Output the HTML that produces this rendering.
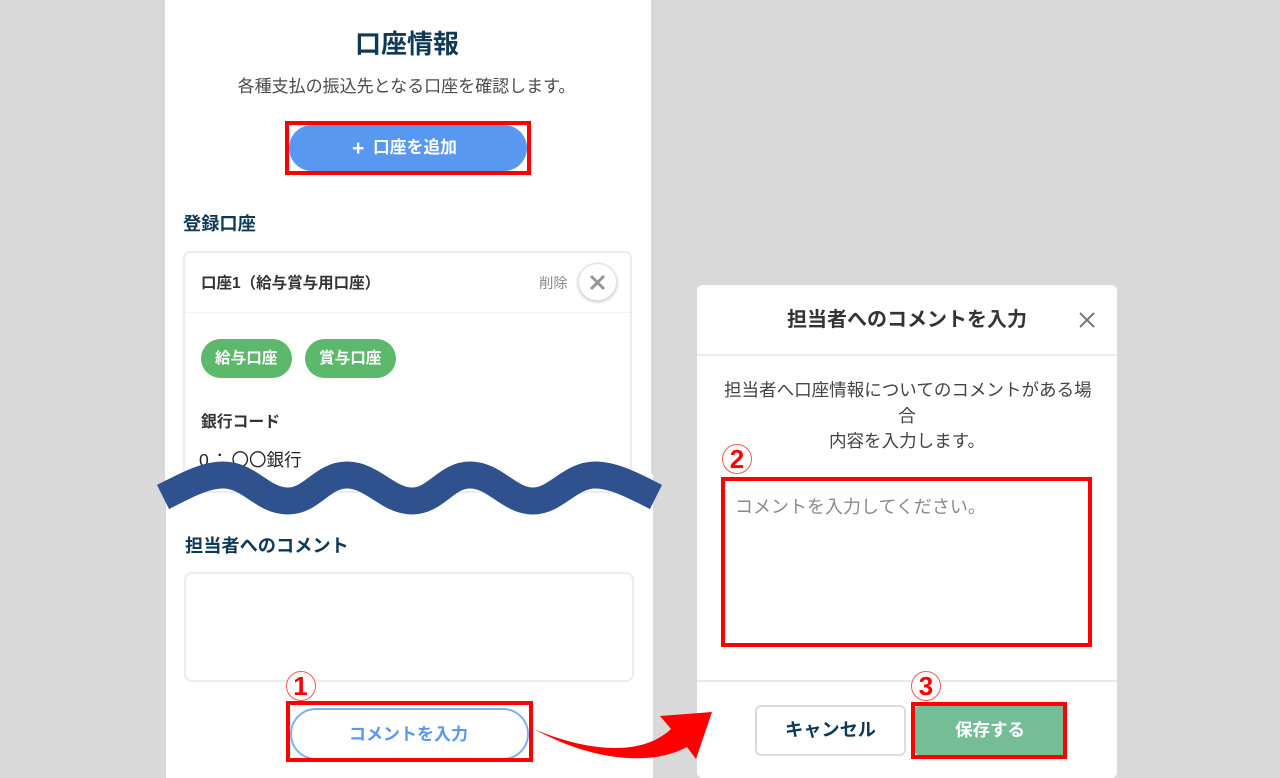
<!DOCTYPE html>
<html lang="ja"><head><meta charset="utf-8"><title>口座情報</title>
<style>
html,body{margin:0;padding:0;width:1280px;height:778px;overflow:hidden}
body{background:#d9d9d9;font-family:"Liberation Sans","Noto Sans CJK JP",sans-serif}
#w{left:0;top:0;width:1280px;height:778px;overflow:hidden}
div,span{position:absolute;box-sizing:border-box}
.t{white-space:nowrap;line-height:1}
.b{font-weight:700}
.c{text-align:center}
.red{border:4px solid #f00}
.num{width:30px;height:30px;border:1px solid #f55;border-radius:50%;background:#fff;color:#f00;font-weight:700;font-size:26px;line-height:28px;text-align:center}
svg{position:absolute;left:0;top:0}
</style></head><body><div id="w">
<div style="left:165px;top:0;width:486px;height:480px;background:#fff"></div>
<div style="left:166px;top:474px;width:487px;height:304px;background:#fff"></div>

<div class="t b c" style="left:164px;width:486px;top:31px;font-size:26px;color:#0f3a57">口座情報</div>
<div class="t c" style="left:163.5px;width:486px;top:77.5px;font-size:17px;color:#4a4a4a">各種支払の振込先となる口座を確認します。</div>

<div class="c" style="left:289px;top:125px;width:238px;height:46px;border-radius:23px;background:#5898f0"></div>
<div class="t b" style="left:352px;top:138px;font-size:21px;color:#fff">+</div>
<div class="t b" style="left:373px;top:140px;font-size:16.8px;color:#fff">口座を追加</div>
<div class="red" style="left:285px;top:121px;width:246px;height:54px"></div>

<div class="t b" style="left:183px;top:215px;font-size:18.2px;color:#0f3a57">登録口座</div>

<div style="left:182.5px;top:250.5px;width:449px;height:242px;border:2px solid #ececec;border-radius:7px;background:#fff"></div>
<div style="left:185px;top:312px;width:445px;height:1px;background:#f3f3f3"></div>
<div class="t b" style="left:201px;top:276px;font-size:15.5px;color:#333">口座1（給与賞与用口座）</div>
<div class="t" style="left:539px;top:277px;font-size:14.4px;color:#8a8a8a">削除</div>
<div style="left:578px;top:263px;width:39px;height:38px;border-radius:50%;background:#fff;border:1px solid #e2e2e2;box-shadow:0 1px 3px rgba(0,0,0,.25)"></div>
<svg width="1280" height="778"><path d="M591 276L604 289M604 276L591 289" stroke="#969696" stroke-width="3" fill="none"/></svg>

<div style="left:200.5px;top:339px;width:91px;height:39px;border-radius:20px;background:#5cb96b"></div>
<div style="left:305px;top:339px;width:91px;height:39px;border-radius:20px;background:#5cb96b"></div>
<div class="t b" style="left:215px;top:351px;font-size:15.6px;color:#fff">給与口座</div>
<div class="t b" style="left:319px;top:351px;font-size:15.6px;color:#fff">賞与口座</div>
<div class="t b" style="left:201px;top:415px;font-size:15.8px;color:#333">銀行コード</div>
<div class="t" style="left:199px;top:452px;font-size:17.5px;color:#222">0</div>
<div class="t" style="left:211px;top:452px;font-size:17.5px;color:#222">：</div>
<div class="t" style="left:231.5px;top:452px;font-size:17.5px;color:#222">〇〇銀行</div>

<svg width="1280" height="778"><path d="M163 497C185 486 204 475 223 475C250 475 262 501 288 501C312 501 322 475 347 475C372 475 388 501 412 501C436 501 446 475 470 475C495 475 509 501 533 501C556 501 570 475 595 475C615 475 636 487 656 497" fill="none" stroke="#2f528f" stroke-width="27"/></svg>

<div class="t b" style="left:185px;top:537px;font-size:18.2px;color:#0f3a57">担当者へのコメント</div>
<div style="left:184px;top:572px;width:450px;height:110px;border:2px solid #ececec;border-radius:8px;background:#fff"></div>

<div style="left:290px;top:708px;width:239px;height:52px;border:2px solid #7db0f3;border-radius:26px;background:#fff"></div>
<div class="t b" style="left:349px;top:726px;font-size:17px;color:#5898f0">コメントを入力</div>
<div class="red" style="left:286px;top:701px;width:247px;height:61px"></div>
<div class="num" style="left:285.5px;top:671px">1</div>

<!-- modal -->
<div style="left:697px;top:285px;width:420px;height:493px;background:#fff;border-radius:6px"></div>
<div class="t b" style="left:787px;top:310px;font-size:20px;color:#333">担当者へのコメントを入力</div>
<svg width="1280" height="778"><path d="M1080 313L1094 327M1094 313L1080 327" stroke="#777" stroke-width="2" fill="none"/></svg>
<div style="left:697px;top:354px;width:420px;height:2px;background:#ececec"></div>
<div class="t" style="left:724px;top:381.5px;font-size:17.55px;color:#444">担当者へ口座情報についてのコメントがある場</div>
<div class="t c" style="left:697px;width:420px;top:408px;font-size:17.55px;color:#444">合</div>
<div class="t c" style="left:697px;width:420px;top:433px;font-size:17.55px;color:#444">内容を入力します。</div>
<div class="num" style="left:722px;top:444px">2</div>
<div class="red" style="left:721px;top:477px;width:371px;height:170px"></div>
<div class="t" style="left:735px;top:497.5px;font-size:18px;color:#8a8a8a">コメントを入力してください。</div>
<div style="left:697px;top:680px;width:420px;height:2px;background:#e9e9e9"></div>

<div style="left:755px;top:705px;width:151px;height:51px;border:2px solid #dcdcdc;border-radius:6px;background:#fff"></div>
<div class="t b" style="left:785px;top:721px;font-size:18.2px;color:#0f3a57">キャンセル</div>
<div style="left:915px;top:706px;width:148px;height:49px;background:#75bd97;border-radius:4px 0 0 4px"></div>
<div class="t b" style="left:955px;top:722px;font-size:17.5px;color:#fff">保存する</div>
<div class="red" style="left:911px;top:702px;width:156px;height:57px"></div>
<div class="num" style="left:911px;top:671px">3</div>

<svg width="1280" height="778"><path d="M534 729C578 748 638 760 671 729L660 716L712 712L696 759L687 747C650 767 590 760 534 729Z" fill="#f00"/></svg>
</div></body></html>
